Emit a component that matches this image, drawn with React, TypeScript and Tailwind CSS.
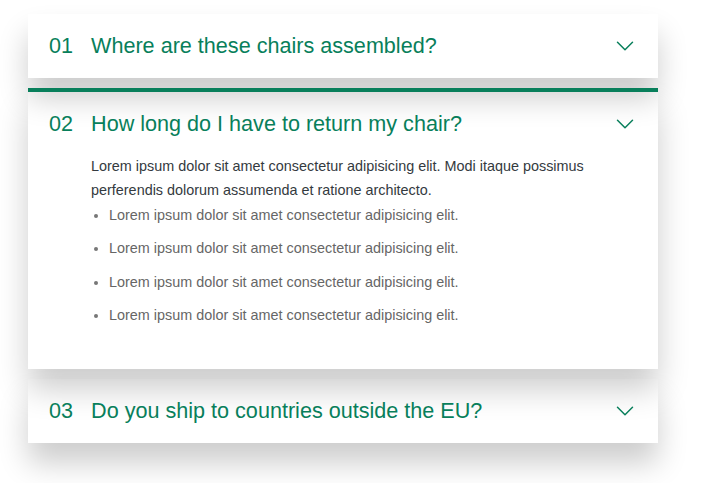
import React from "react";

type Item = {
  num: string;
  title: string;
  open?: boolean;
};

const items: Item[] = [
  { num: "01", title: "Where are these chairs assembled?" },
  { num: "02", title: "How long do I have to return my chair?", open: true },
  { num: "03", title: "Do you ship to countries outside the EU?" },
];

function Chevron() {
  return (
    <svg
      viewBox="0 0 24 24"
      fill="none"
      stroke="currentColor"
      strokeWidth={1.5}
      className="w-6 h-6 text-[#087f5b]"
    >
      <path strokeLinecap="round" strokeLinejoin="round" d="M19.5 8.25l-7.5 7.5-7.5-7.5" />
    </svg>
  );
}

function AccordionItem({ item }: { item: Item }) {
  return (
    <div
      className={`grid grid-cols-[auto_1fr_auto] gap-x-[18px] pl-[21px] pr-[21px] pt-5 shadow-[0_20px_30px_rgba(0,0,0,0.2)] ${
        item.open ? "border-t-4 border-[#087f5b] pb-[42px]" : "pb-5"
      }`}
    >
      <span className="text-[21.6px] leading-6 text-[#087f5b]">{item.num}</span>
      <span className="text-[21.6px] leading-6 text-[#087f5b]">{item.title}</span>
      <Chevron />
      {item.open && (
        <div className="col-start-2 col-span-2 mt-[18px] text-[14.4px] leading-6">
          <p className="text-[#343a40]">
            Lorem ipsum dolor sit amet consectetur adipisicing elit. Modi itaque possimus perferendis dolorum
            assumenda et ratione architecto.
          </p>
          <ul className="list-disc mt-px pl-[18px] text-[#666] flex flex-col gap-[9.3px] marker:text-[#777]">
            <li>Lorem ipsum dolor sit amet consectetur adipisicing elit.</li>
            <li>Lorem ipsum dolor sit amet consectetur adipisicing elit.</li>
            <li>Lorem ipsum dolor sit amet consectetur adipisicing elit.</li>
            <li>Lorem ipsum dolor sit amet consectetur adipisicing elit.</li>
          </ul>
        </div>
      )}
    </div>
  );
}

export default function App() {
  return (
    <div className="min-h-screen bg-white font-['Liberation_Sans',Arial,sans-serif] pt-[14px] pl-[28px]">
      <div className="w-[630px] flex flex-col gap-[10px]">
        {items.map((item) => (
          <AccordionItem key={item.num} item={item} />
        ))}
      </div>
    </div>
  );
}
